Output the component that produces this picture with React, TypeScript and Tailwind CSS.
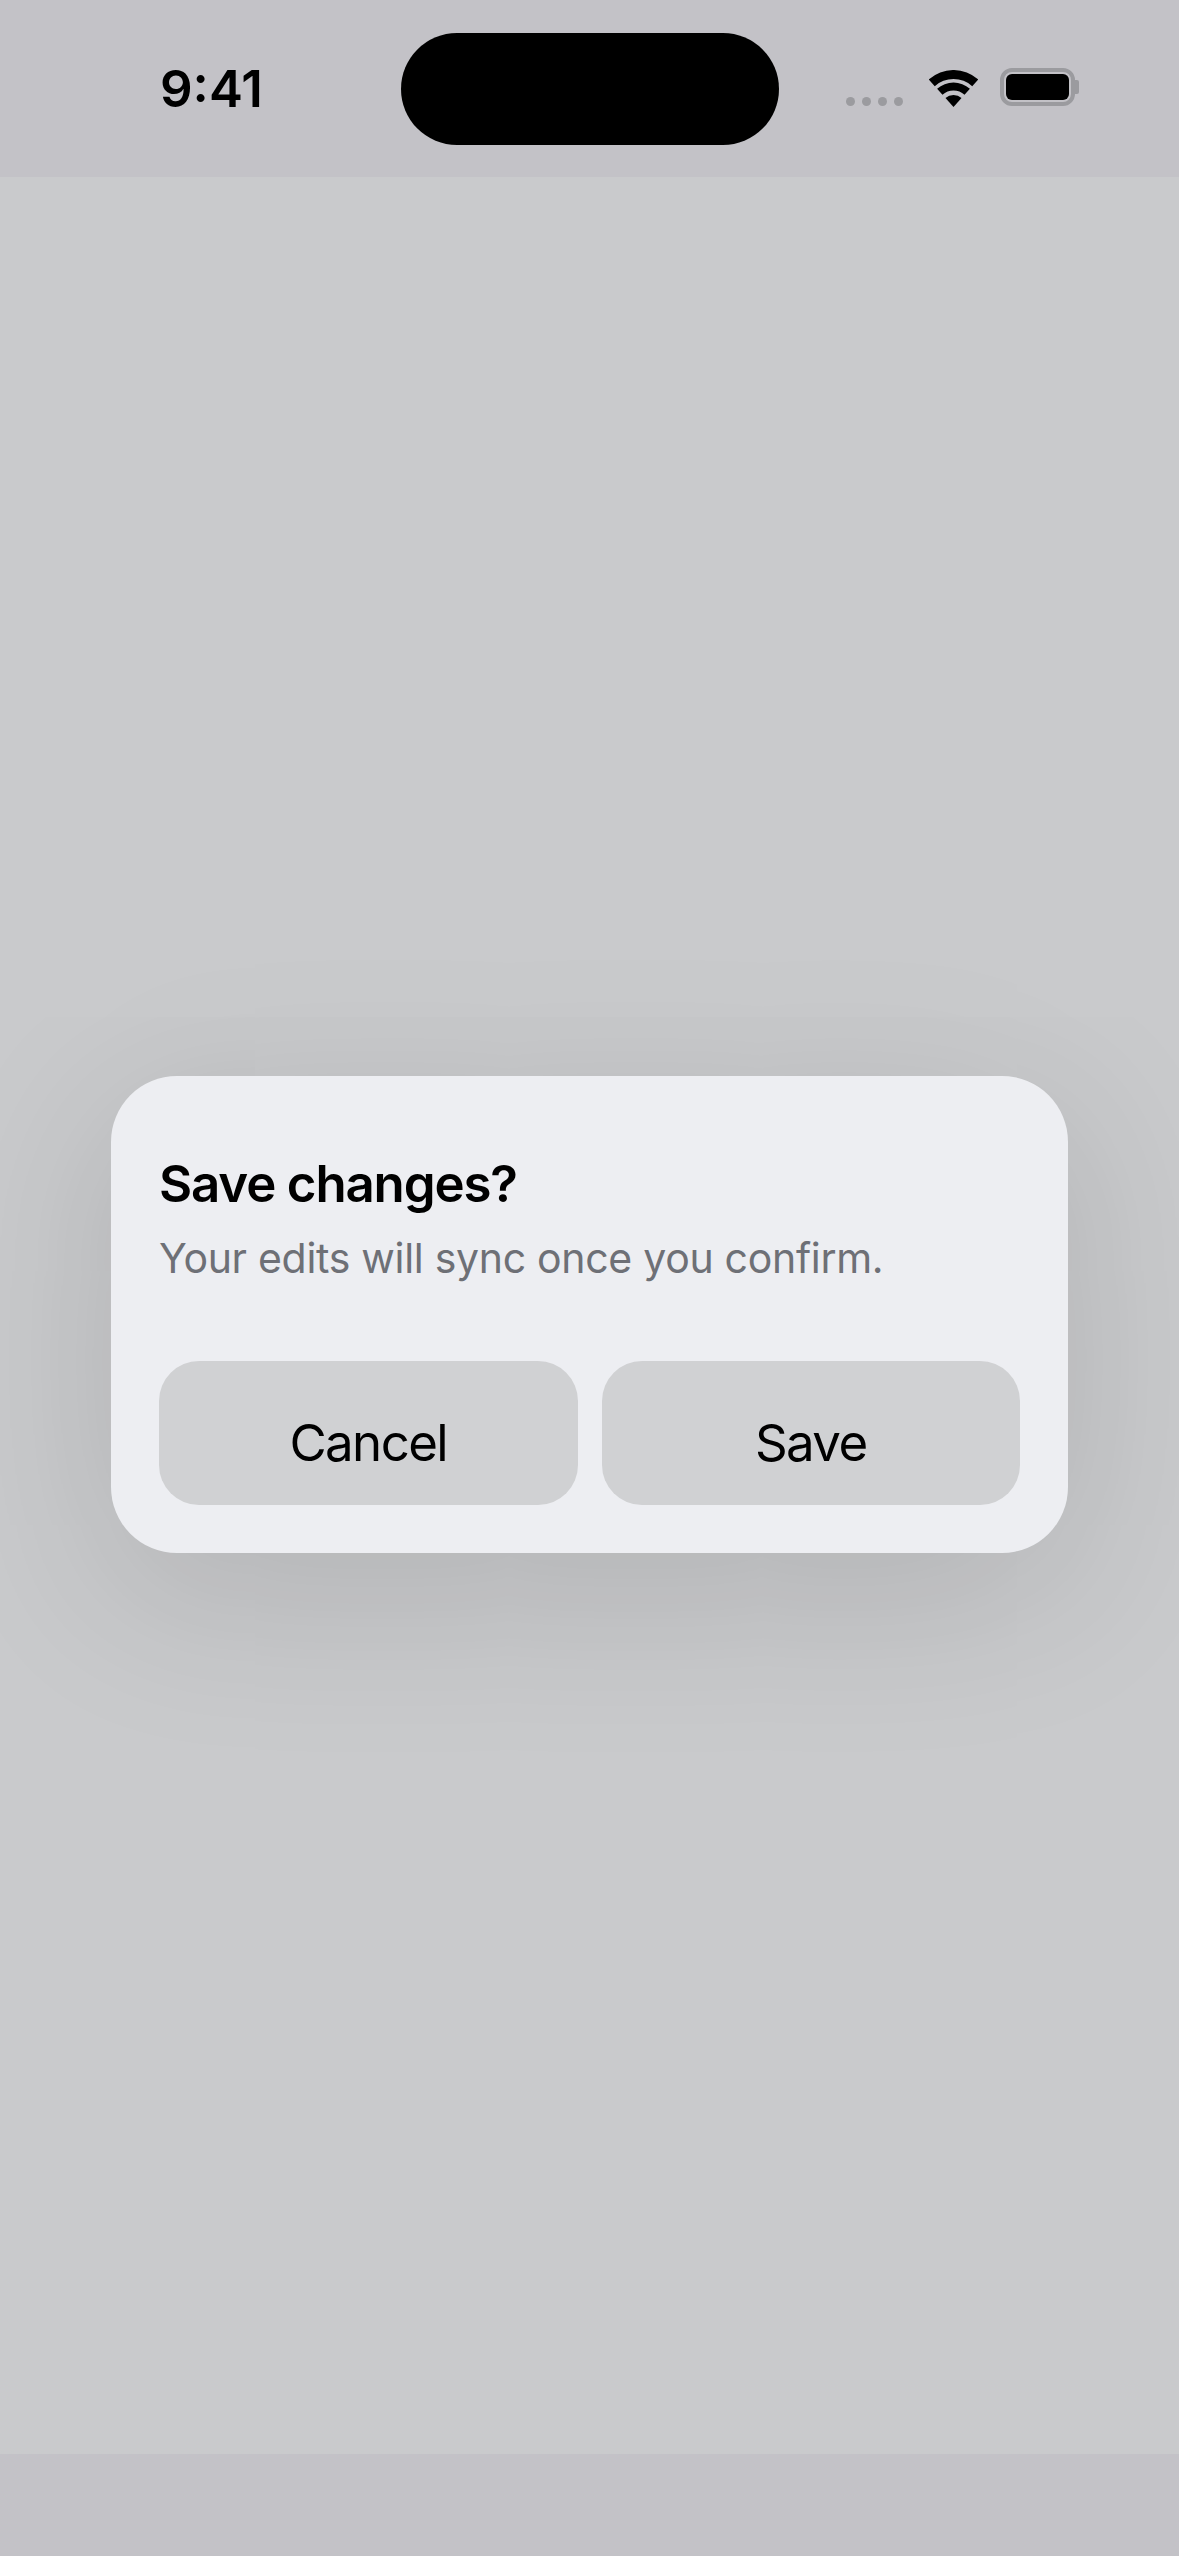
const font = { fontFamily: 'Inter, sans-serif' };

// annular sector around the wifi apex (24.5, 37), half-angle in degrees
function band(outer: number, inner: number, half = 42) {
  const a = (half * Math.PI) / 180;
  const pt = (r: number, s: number) =>
    `${(24.5 + s * r * Math.sin(a)).toFixed(2)} ${(37 - r * Math.cos(a)).toFixed(2)}`;
  return `M${pt(outer, -1)} A${outer} ${outer} 0 0 1 ${pt(outer, 1)} L${pt(inner, 1)} A${inner} ${inner} 0 0 0 ${pt(inner, -1)} Z`;
}

function Wifi() {
  return (
    <svg width="49" height="37" viewBox="0 0 49 37" fill="#000">
      <path d={band(37, 28)} />
      <path d={band(24.5, 16.5)} />
      <path d={`M24.5 37 L${(24.5 - 12 * Math.sin(0.733)).toFixed(2)} ${(37 - 12 * Math.cos(0.733)).toFixed(2)} A12 12 0 0 1 ${(24.5 + 12 * Math.sin(0.733)).toFixed(2)} ${(37 - 12 * Math.cos(0.733)).toFixed(2)} Z`} />
    </svg>
  );
}

function Battery() {
  return (
    <div className="flex items-center">
      <div className="w-[75px] h-[38px] rounded-[12px] border-[4px] border-[#9b9b9f] p-[2px]">
        <div className="w-full h-full rounded-[6px] bg-black" />
      </div>
      <div className="w-[4px] h-[14px] rounded-r-[2px] bg-[#9b9b9f]" />
    </div>
  );
}

function StatusBar() {
  return (
    <div className="h-[177px] shrink-0 flex items-center bg-[#c3c2c7]">
      <div className="w-[401px] pl-[160px] text-[51px] leading-none font-semibold text-black">9:41</div>
      <div className="w-[378px] h-[112px] rounded-full bg-black" />
      <div className="flex-1 flex items-center pl-[67px]">
        <div className="flex gap-[7px] mt-[25px]">
          {[0, 1, 2, 3].map((i) => (
            <div key={i} className="w-[9px] h-[9px] rounded-full bg-[#9b9b9f]" />
          ))}
        </div>
        <div className="ml-[26px]">
          <Wifi />
        </div>
        <div className="ml-[22px] -mt-[3px]">
          <Battery />
        </div>
      </div>
    </div>
  );
}

function DialogButton({ label }: { label: string }) {
  return (
    <button className="flex-1 h-[144px] pt-[20px] rounded-[40px] bg-[#d0d1d3] text-[51px] tracking-[-1.6px] text-black">
      {label}
    </button>
  );
}

export default function App() {
  return (
    <div className="w-[1179px] h-[2556px] flex flex-col bg-[#c9cacc] overflow-hidden" style={font}>
      <StatusBar />
      <main className="flex-1 flex items-center justify-center px-[111px] pb-[2px]">
        <div className="w-full h-[477px] rounded-[66px] bg-[#edeef2] p-[48px] flex flex-col shadow-[0_36px_180px_rgba(0,0,0,0.13)]">
          <h1 className="mt-[31px] text-[51px] leading-[58px] font-semibold tracking-[-1.15px] text-black">Save changes?</h1>
          <p className="mt-[20px] text-[41px] leading-[50px] tracking-[-0.3px] text-[#6e7076]">Your edits will sync once you confirm.</p>
          <div className="mt-auto flex gap-[24px]">
            <DialogButton label="Cancel" />
            <DialogButton label="Save" />
          </div>
        </div>
      </main>
      <div className="h-[102px] shrink-0 bg-[#c3c2c7]" />
    </div>
  );
}
